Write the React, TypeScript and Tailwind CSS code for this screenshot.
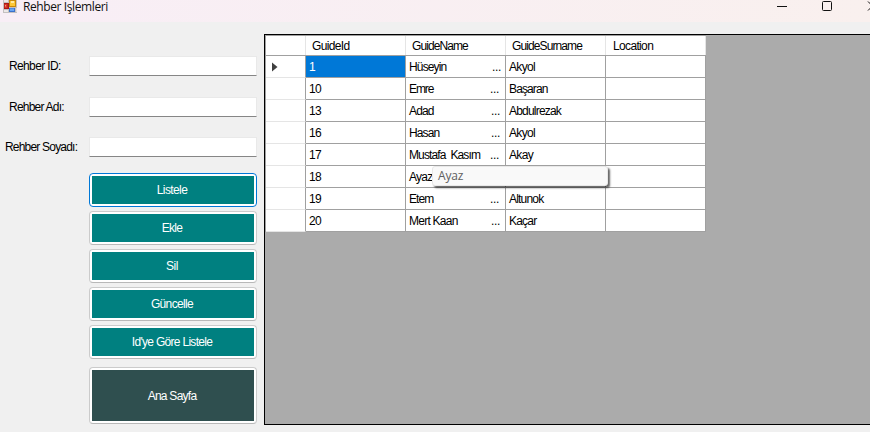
const rows = [
  { id: '1', name: 'Hüseyin', nameW: 'tracking-[-0.85px]', dots: 'pr-[4px]', surname: 'Akyol', surW: 'tracking-[-0.65px]' },
  { id: '10', name: 'Emre', nameW: 'tracking-[-1.1px]', dots: 'pr-[6px]', surname: 'Başaran', surW: 'tracking-[-0.87px]' },
  { id: '13', name: 'Adad', nameW: 'tracking-[-0.87px]', dots: 'pr-[5px]', surname: 'Abdulrezak', surW: 'tracking-[-0.8px]' },
  { id: '16', name: 'Hasan', nameW: 'tracking-[-0.9px]', dots: 'pr-[5px]', surname: 'Akyol', surW: 'tracking-[-0.65px]' },
  { id: '17', name: 'Mustafa  Kasım', nameW: 'tracking-[-0.88px]', dots: 'pr-[6px]', surname: 'Akay', surW: 'tracking-[-0.65px]' },
  { id: '18', name: 'Ayaz', nameW: 'tracking-[-0.75px]', dots: '', surname: '', surW: '' },
  { id: '19', name: 'Etem', nameW: 'tracking-[-0.9px]', dots: 'pr-[6px]', surname: 'Altunok', surW: 'tracking-[-0.8px]' },
  { id: '20', name: 'Mert Kaan', nameW: 'tracking-[-0.75px]', dots: 'pr-[5px]', surname: 'Kaçar', surW: 'tracking-[-0.8px]' },
];

const headers = [
  { text: 'GuideId', cls: 'pl-[6px] tracking-[-0.65px]' },
  { text: 'GuideName', cls: 'pl-[6px] tracking-[-0.92px]' },
  { text: 'GuideSurname', cls: 'pl-[6px] tracking-[-0.9px]' },
  { text: 'Location', cls: 'pl-[7px] tracking-[-0.65px]' },
];

const fields = [
  { label: 'Rehber ID:', pad: 'pl-[9px]', mb: 'mb-[21px]', cls: 'tracking-[-0.63px]' },
  { label: 'Rehber Adı:', pad: 'pl-[9px]', mb: 'mb-[20px]', cls: 'tracking-[-0.78px]' },
  { label: 'Rehber Soyadı:', pad: 'pl-[5px]', mb: 'mb-4', cls: 'tracking-[-0.8px]' },
];

const buttons = [
  { text: 'Listele', cls: 'tracking-[-0.6px]' },
  { text: 'Ekle', cls: 'tracking-[-0.7px]' },
  { text: 'Sil', cls: 'tracking-[-0.5px]' },
  { text: 'Güncelle', cls: 'tracking-[-0.65px]' },
  { text: "Id'ye Göre Listele", cls: 'tracking-[-0.7px]' },
];

function AppIcon() {
  return (
    <svg className="ml-[3px] block shrink-0" width="14" height="13" viewBox="0 0 14 13">
      <rect width="14" height="13" fill="#c4c0c0" />
      <rect x="1" y="0" width="4" height="2" fill="#ece8e8" />
      <rect x="1" y="3" width="5" height="6" fill="#a81818" />
      <rect x="1.5" y="4" width="3" height="4" fill="#d8382a" />
      <rect x="2" y="5" width="1" height="1.5" fill="#f7917f" />
      <rect x="1" y="10" width="4" height="2" fill="#ece8e8" />
      <rect x="6" y="0" width="7" height="7" fill="#c8880c" />
      <rect x="7" y="1" width="5" height="5" fill="#fcc838" />
      <rect x="8" y="1" width="3" height="2" fill="#ffe9a0" />
      <rect x="6" y="8" width="6" height="4" fill="#3a72cc" />
      <rect x="7" y="8.5" width="4" height="2.5" fill="#69a6f4" />
      <rect x="13" y="8" width="1" height="4" fill="#e4e0e0" />
    </svg>
  );
}

function TitleBar() {
  return (
    <header className="flex h-[22px] items-start bg-gradient-to-r from-[#f8eef6] to-[#f9f0ee]">
      <AppIcon />
      <h1 className="ml-[6px] font-['Open_Sans','Noto_Sans',sans-serif] text-[12px] leading-[14px] tracking-[-0.4px] text-[#111]">
        Rehber İşlemleri
      </h1>
      <svg className="ml-auto block shrink-0" width="94" height="13" viewBox="0 0 94 13" fill="none" stroke="#111">
        <path d="M1 6.5h10" />
        <rect x="46.5" y="1.5" width="9" height="9" rx="1" />
        <path d="M92 1.5l9 9M101 1.5l-9 9" />
      </svg>
    </header>
  );
}

function Sidebar() {
  return (
    <section className="flex w-[264px] shrink-0 flex-col pt-[34px]">
      {fields.map((f) => (
        <label key={f.label} className={`flex h-5 items-center ${f.mb}`}>
          <span className={`w-[89px] shrink-0 whitespace-nowrap ${f.pad} ${f.cls}`}>{f.label}</span>
          <input className="h-5 w-[168px] border border-[#e9e9e9] border-b-[#868686] bg-white outline-none" />
        </label>
      ))}
      <div className="ml-[89px] flex w-[168px] flex-col gap-1">
        {buttons.map((b, i) => (
          <button
            key={b.text}
            className={`h-[34px] rounded-[4px] border bg-white p-[2px] text-white ${i === 0 ? 'border-[#0078d7]' : 'border-[#cbcbcb] border-b-[#b8b8b8]'}`}
          >
            <span className={`flex h-full items-center justify-center bg-[#008080] pr-[2px] ${b.cls}`}>{b.text}</span>
          </button>
        ))}
        <button className="mt-1 h-[57px] rounded-[4px] border border-[#cbcbcb] border-b-[#b8b8b8] bg-white p-[2px] text-white">
          <span className="flex h-full items-center justify-center bg-[#2f4f4f] pr-[2px] tracking-[-0.75px]">Ana Sayfa</span>
        </button>
      </div>
    </section>
  );
}

function DataGrid() {
  const cell = 'flex items-center border-r border-b border-[#a0a0a0] pl-[3px] whitespace-pre';
  return (
    <section className="mt-3 h-[391px] min-w-0 flex-1 border border-r-0 border-black bg-[#ababab]">
      <div className="relative w-[441px] border-t border-l border-[#a0a0a0]">
        <div className="grid h-5 grid-cols-[40px_repeat(4,100px)] border-b border-[#a0a0a0] bg-white">
          <div className="border-r border-[#e5e5e5]" />
          {headers.map((h) => (
            <div key={h.text} className={`flex items-center border-r border-[#e5e5e5] ${h.cls}`}>
              {h.text}
            </div>
          ))}
        </div>
        {rows.map((r, i) => (
          <div key={r.id} className="grid h-[22px] grid-cols-[40px_repeat(4,100px)]">
            <div className="flex items-center border-r border-b border-r-[#a0a0a0] border-b-[#e5e5e5] bg-white pl-[6px]">
              {i === 0 && (
                <svg width="6" height="10" viewBox="0 0 6 10">
                  <path d="M0 0.5L5.5 5L0 9.5z" fill="#404040" />
                </svg>
              )}
            </div>
            <div className={`${cell} tracking-[-0.6px] ${i === 0 ? 'bg-[#0078d7] text-white' : 'bg-white'}`}>{r.id}</div>
            <div className={`${cell} justify-between bg-white`}>
              <span className={r.nameW}>{r.name}</span>
              {r.dots && <span className={`tracking-[-0.3px] ${r.dots}`}>...</span>}
            </div>
            <div className={`${cell} bg-white ${r.surW}`}>{r.surname}</div>
            <div className={`${cell} bg-white`} />
          </div>
        ))}
        <div className="absolute top-[130px] left-[166px] flex h-[20px] w-[176px] items-center rounded-[3px] border border-[#e8e8e8] bg-[#f9f9f9] pl-[5px] font-['Open_Sans','Noto_Sans',sans-serif] text-[12px] tracking-[-0.2px] text-[#606060] shadow-[2px_2px_2px_rgba(0,0,0,0.6)]">
          Ayaz
        </div>
      </div>
    </section>
  );
}

export default function App() {
  return (
    <main className="h-[432px] w-[870px] overflow-hidden bg-[#f0f0f0] font-['Liberation_Sans',Arial,sans-serif] text-[12px] leading-4 text-black">
      <TitleBar />
      <div className="flex">
        <Sidebar />
        <DataGrid />
      </div>
    </main>
  );
}
